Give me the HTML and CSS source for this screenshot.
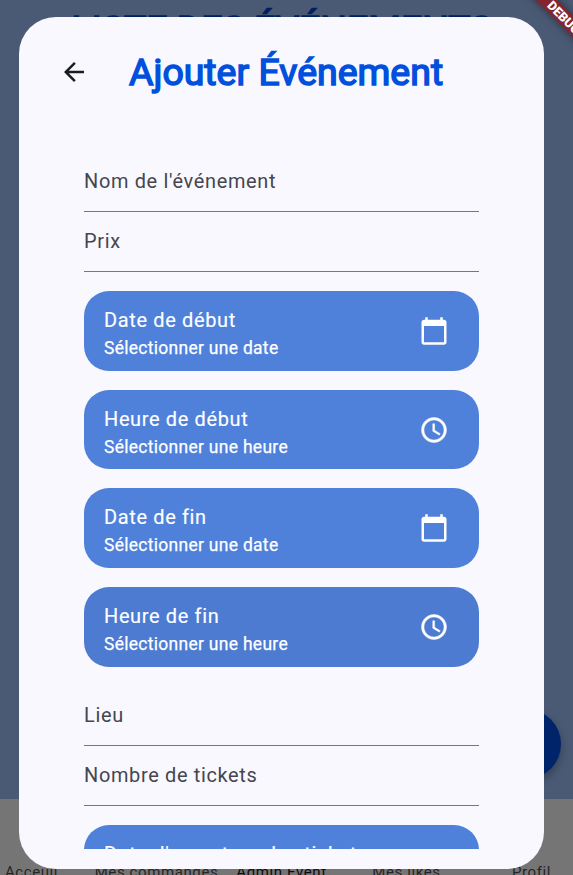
FILE: index.html
```html
<!DOCTYPE html>
<html lang="fr">
<head>
<meta charset="utf-8">
<title>Ajouter Événement</title>
<link rel="stylesheet" href="styles.css">
</head>
<body>
<svg class="defs" width="0" height="0" aria-hidden="true">
  <symbol id="calendar" viewBox="0 0 24 24"><path d="M20 3h-1V1h-2v2H7V1H5v2H4c-1.100 0-2 .9-2 2v16c0 1.100.9 2 2 2h16c1.100 0 2-.9 2-2V5c0-1.100-.9-2-2-2zm0 18H4V8h16v13z"/></symbol>
  <symbol id="clock" viewBox="0 0 24 24"><path stroke="#fff" stroke-width=".35" d="M12 2C6.480 2 2 6.480 2 12s4.480 10 10 10 10-4.480 10-10S17.520 2 12 2zm0 18c-4.420 0-8-3.580-8-8s3.580-8 8-8 8 3.580 8 8-3.580 8-8 8zm.5-13H11v6l5.250 3.150.75-1.230-4.500-2.670z"/></symbol>
</svg>
<div class="app">
  <main class="page"><h1 class="page-title">LISTE DES ÉVÉNEMENTS</h1></main>
  <nav class="nav">
    <span>Acceuil</span><span>Mes commandes</span><span class="active">Admin Event</span><span>Mes likes</span><span>Profil</span>
  </nav>
  <div class="fab"></div>
  <section class="dialog">
    <header class="head">
      <svg class="back" viewBox="0 0 24 24"><path d="M20 11H7.830l5.590-5.590L12 4l-8 8 8 8 1.410-1.410L7.830 13H20v-2z"/></svg>
      <h2 class="title">Ajouter Événement</h2>
    </header>
    <div class="form">
      <div class="field">Nom de l'événement</div>
      <div class="field">Prix</div>
      <div class="tiles">
        <div class="tile"><div><div class="name">Date de début</div><div class="hint">Sélectionner une date</div></div><svg class="icon"><use href="#calendar"/></svg></div>
        <div class="tile"><div><div class="name">Heure de début</div><div class="hint">Sélectionner une heure</div></div><svg class="icon"><use href="#clock"/></svg></div>
        <div class="tile"><div><div class="name">Date de fin</div><div class="hint">Sélectionner une date</div></div><svg class="icon"><use href="#calendar"/></svg></div>
        <div class="tile hover"><div><div class="name">Heure de fin</div><div class="hint">Sélectionner une heure</div></div><svg class="icon"><use href="#clock"/></svg></div>
      </div>
      <div class="field">Lieu</div>
      <div class="field">Nombre de tickets</div>
      <div class="tiles">
        <div class="tile"><div><div class="name">Date d'ouverture des tickets</div><div class="hint">Sélectionner une date</div></div><svg class="icon"><use href="#calendar"/></svg></div>
      </div>
    </div>
  </section>
  <div class="banner">DEBUG</div>
</div>
</body>
</html>
```

FILE: styles.css
```css
* { box-sizing: border-box; }
body { margin: 0; font-family: Roboto, "Liberation Sans", sans-serif; }
.defs { position: absolute; }
.app { position: relative; width: 573px; height: 875px; overflow: hidden; display: flex; flex-direction: column; background: #757575; }
.page { display: flow-root; height: 799px; flex: none; background: #4a5a75; }
.page-title { margin: 7px 0 0 -9px; text-align: center; white-space: nowrap; font-size: 37.400px; line-height: 44px; font-weight: 400; color: #00205f; -webkit-text-stroke: 1.500px #00205f; }
.nav { height: 100px; flex: none; display: flex; margin: 0 -21px 0 -31px; padding-top: 62.500px; color: #252525; font-size: 15px; line-height: 20px; letter-spacing: .6px; }
.nav span { flex: 1 0 0; min-width: 0; text-align: center; white-space: nowrap; }
.nav .active { color: #0c0c0c; }
.fab { position: absolute; left: 491px; top: 709px; width: 70px; height: 70px; border-radius: 50%; background: #00246a; box-shadow: 0 4px 8px rgba(0,0,0,.3); }
.dialog { position: absolute; left: 19px; top: 17px; width: 525px; height: 852px; border-radius: 37px; background: #f9f8ff; padding: 30px 65px 20px; display: flex; flex-direction: column; }
.head { height: 98px; flex: none; display: flex; align-items: flex-start; margin-left: -25px; }
.back { width: 30px; height: 30px; margin-top: 10px; fill: #1a1b21; flex: none; }
.title { margin: 3px 0 0 40px; white-space: nowrap; font-size: 37.450px; line-height: 44px; font-weight: 400; color: #0050dd; -webkit-text-stroke: 1.500px #0050dd; }
.form { flex: 1; min-height: 0; overflow: hidden; padding-top: 6.500px; }
.field { height: 60px; padding: 17px 0 0; line-height: 24px; font-size: 19.950px; letter-spacing: .66px; color: #45464f; border-bottom: 1.250px solid #767680; }
.tiles { display: grid; gap: 18.800px; padding: 19.400px 0 18.700px; }
.tile { height: 79.900px; border-radius: 25px; background: #4f81da; color: #fff; display: flex; align-items: center; justify-content: space-between; padding: 0 30px 0 20px; }
.tile.hover { background: #4c7bd1; }
.name { padding-top: 6.500px; font-size: 19.950px; line-height: 29px; letter-spacing: .66px; -webkit-text-stroke: .15px #fff; }
.hint { font-size: 17.450px; line-height: 27.500px; letter-spacing: .31px; -webkit-text-stroke: .25px #fff; }
.icon { width: 30px; height: 30px; fill: #fff; }
.banner { position: absolute; right: -61px; top: 9.500px; width: 140px; height: 15px; transform: rotate(45deg); background: #84252e; color: #fff; font-size: 12.700px; line-height: 15px; font-weight: 900; text-align: center; box-shadow: 0 0 8px rgba(0,0,0,.5); }
```
